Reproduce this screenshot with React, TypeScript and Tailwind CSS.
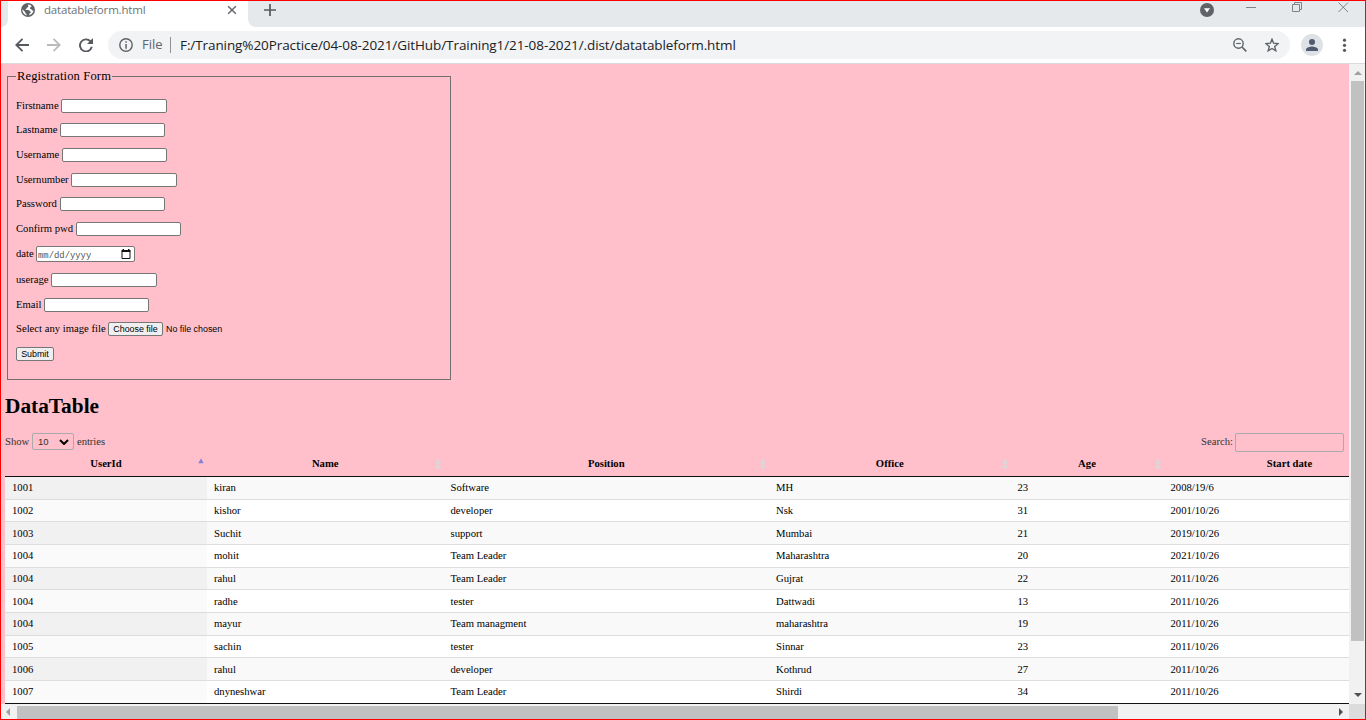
import React from "react";

const serif = "font-['Liberation_Serif',serif]";

const fields = [
  { label: "Firstname", cls: "w-[45px]", box: "w-[106px] h-[14px]", row: "h-[14px] mb-[10px]" },
  { label: "Lastname", cls: "w-[44px]", box: "w-[105px] h-[14px]", row: "h-[14px] mb-[11px]" },
  { label: "Username", cls: "w-[46px]", box: "w-[105px] h-[14px]", row: "h-[14px] mb-[11px]" },
  { label: "Usernumber", cls: "w-[55px]", box: "w-[106px] h-[14px]", row: "h-[14px] mb-[10px]" },
  { label: "Password", cls: "w-[44px]", box: "w-[105px] h-[14px]", row: "h-[14px] mb-[11px]" },
  { label: "Confirm pwd", cls: "w-[60px]", box: "w-[105px] h-[14px]", row: "h-[14px] mb-[10px]" },
  { label: "date", cls: "w-[20px]", box: "w-[99px] h-[16px]", row: "h-[16px] mb-[11px]", date: true },
  { label: "userage", cls: "w-[35px]", box: "w-[106px] h-[14px]", row: "h-[14px] mb-[11px]" },
  { label: "Email", cls: "w-[28px]", box: "w-[105px] h-[14px]", row: "h-[14px] mb-[10px]" },
];

const rows = [
  ["1001", "kiran", "Software", "MH", "23", "2008/19/6"],
  ["1002", "kishor", "developer", "Nsk", "31", "2001/10/26"],
  ["1003", "Suchit", "support", "Mumbai", "21", "2019/10/26"],
  ["1004", "mohit", "Team Leader", "Maharashtra", "20", "2021/10/26"],
  ["1004", "rahul", "Team Leader", "Gujrat", "22", "2011/10/26"],
  ["1004", "radhe", "tester", "Dattwadi", "13", "2011/10/26"],
  ["1004", "mayur", "Team managment", "maharashtra", "19", "2011/10/26"],
  ["1005", "sachin", "tester", "Sinnar", "23", "2011/10/26"],
  ["1006", "rahul", "developer", "Kothrud", "27", "2011/10/26"],
  ["1007", "dnyneshwar", "Team Leader", "Shirdi", "34", "2011/10/26"],
];

const columns = "grid grid-cols-[202px_236.5px_325.5px_241.5px_153px_252px] w-[1410.5px]";
const headers = ["UserId", "Name", "Position", "Office", "Age", "Start date"];

function SortIcon({ active }: { active: boolean }) {
  return (
    <svg className="h-[14px] w-[8px] shrink-0" viewBox="0 0 8 14">
      {active ? (
        <path d="M4 1.5 6.7 6.2H1.3z" fill="#8080dd" />
      ) : (
        <path d="M4 1.5 6.8 6.7H1.2zM4 13.2 6.8 8H1.2z" fill="#d8d8d9" />
      )}
    </svg>
  );
}

function TabStrip() {
  return (
    <div className="flex h-[26px] bg-[#e6e9eb] font-['Open_Sans','Noto_Sans',sans-serif]">
      <div className="w-[7px] bg-white">
        <div className="h-[26px] w-[7px] rounded-br-[7px] bg-[#e6e9eb]" />
      </div>
      <div className="flex h-[26px] w-[240px] bg-white pl-[13px]">
        <svg className="mt-[2px] size-[14px]" viewBox="0 0 14 14">
          <circle cx="7" cy="7" r="7" fill="#5f6368" />
          <path
            d="M7.6 1.5c-.9.2-.8 1-.3 1.6.6.6-.3 1.2-1 1.3-.8.2-.5 1.4-1.3 1.6-.8.1-.5 1.1.4 1.1h2.2c1 .1.8 1.3 1.8 1.5 1 .1 1 1-.1 1.2-.9.1-.7 1.5-1.3 2.4A5.7 5.7 0 0 0 12.5 7.6c-1 .2-1.8-.2-1.9-1.1-.1-.8-1.7-.2-1.7-1.3s1.2-.6 1.6-1.6c.2-.6-.6-1.6-2.9-2.1zM1.4 6.3c-.3 2.7 1.4 5.3 4.3 6.2-.1-1-.2-1.5-.9-1.9-.8-.5-.4-1.7-1.1-2.2z"
            fill="#fff"
          />
        </svg>
        <span className="ml-[9px] mt-px w-[180px] whitespace-nowrap text-[11.5px] leading-[16px] tracking-[-0.18px] text-[#6e7276]">
          datatableform.html
        </span>
        <svg className="ml-[2px] mt-[3px] size-[12px]" viewBox="0 0 12 12" stroke="#5f6368" strokeWidth="1.4">
          <path d="M2.2 2.2 9.8 9.8M9.8 2.2 2.2 9.8" />
        </svg>
      </div>
      <div className="w-[10px] bg-white">
        <div className="h-[26px] rounded-bl-[8px] bg-[#e6e9eb]" />
      </div>
      <svg className="ml-[5px] mt-[2px] size-[14px]" viewBox="0 0 14 14" stroke="#55595d" strokeWidth="1.7">
        <path d="M7 1v12M1 7h12" />
      </svg>
      <div className="grow" />
      <svg className="mr-[32px] mt-[2px] size-[14px]" viewBox="0 0 14 14">
        <circle cx="7" cy="7" r="7" fill="#5f6368" />
        <path d="M4 5.3h6L7 9.5z" fill="#fff" />
      </svg>
      <svg className="mt-px h-[11px] w-[105px]" viewBox="0 0 105 11" fill="none" stroke="#808285" strokeWidth="1">
        <path d="M0 5.5h10" />
        <path d="M46.5 2.5h7v7h-7zM48.5 2.5v-2h7v7h-2" />
        <path d="m92.5.5 9.5 9.5M102 .5l-9.5 9.5" />
      </svg>
      <div className="w-[14px]" />
    </div>
  );
}

function Toolbar() {
  return (
    <div className="flex h-[37px] items-center border-b border-[#d8dadd] bg-white font-['Open_Sans','Noto_Sans',sans-serif]">
      <svg className="ml-[14px] size-[14px]" viewBox="0 0 14 14" fill="none" stroke="#55595d" strokeWidth="1.8">
        <path d="M14 7H1.5M7.5.8 1.3 7l6.2 6.2" />
      </svg>
      <svg className="ml-[18px] size-[14px]" viewBox="0 0 14 14" fill="none" stroke="#b9bbbd" strokeWidth="1.8">
        <path d="M0 7h12.5M6.5.8 12.7 7l-6.2 6.2" />
      </svg>
      <svg className="ml-[18px] size-[14px]" viewBox="0 0 14 14">
        <path d="M11.5 3.4A6 6 0 1 0 12.8 8.8" fill="none" stroke="#55595d" strokeWidth="1.9" />
        <path d="M14 0v6H8z" fill="#55595d" />
      </svg>
      <div className="ml-[15px] flex h-[28px] w-[1182px] items-center rounded-full bg-[#f1f3f4]">
        <svg className="ml-[11px] size-[14px]" viewBox="0 0 14 14">
          <circle cx="7" cy="7" r="6.2" fill="none" stroke="#5f6368" strokeWidth="1.4" />
          <path d="M6.3 3.3h1.5v1.5H6.3zM6.3 6h1.5v4.7H6.3z" fill="#5f6368" />
        </svg>
        <span className="ml-[9px] w-[28px] whitespace-nowrap text-[13px] text-[#5f6368]">File</span>
        <div className="h-[16px] w-px bg-[#8f9295]" />
        <span className="ml-[9px] w-[1053px] whitespace-nowrap text-[13.5px] tracking-[-0.085px] text-[#202124]">
          F:/Traning%20Practice/04-08-2021/GitHub/Training1/21-08-2021/.dist/datatableform.html
        </span>
        <svg className="size-[14px]" viewBox="0 0 14 14" fill="none" stroke="#5f6368" strokeWidth="1.4">
          <circle cx="5.5" cy="5.5" r="4.7" />
          <path d="M3.2 5.5h4.6" strokeWidth="1.1" />
          <path d="m9 9 4.3 4.3" strokeWidth="1.7" />
        </svg>
        <svg className="ml-[18px] size-[14px]" viewBox="0 0 14 14" fill="none" stroke="#5f6368" strokeWidth="1.4">
          <path d="m7 1.3 1.6 3.9 4.5.4-3.4 2.8 1.1 4.4L7 10.5l-3.8 2.3 1.1-4.4L.9 5.6l4.5-.4z" />
        </svg>
      </div>
      <svg className="ml-[11px] size-[22px]" viewBox="0 0 22 22">
        <circle cx="11" cy="11" r="11" fill="#dee1e6" />
        <circle cx="11" cy="8" r="3" fill="#4f5b6e" />
        <path d="M5 17v-1.5c0-2 4-3 6-3s6 1 6 3V17z" fill="#4f5b6e" />
      </svg>
      <svg className="ml-[18px] h-[14px] w-[6px]" viewBox="0 0 6 14" fill="#55595d">
        <circle cx="3.5" cy="2.2" r="1.6" />
        <circle cx="3.5" cy="7.3" r="1.6" />
        <circle cx="3.5" cy="12.3" r="1.6" />
      </svg>
    </div>
  );
}

function RegistrationForm() {
  return (
    <fieldset className="ml-[6px] mt-[4px] h-[312px] w-[444px] border border-[#70706c] pl-[8px]">
      <legend className="h-[16px] w-[96px] whitespace-nowrap pl-px text-[12.5px] leading-[16px] tracking-[0.16px]">
        Registration Form
      </legend>
      <div className="h-[15px]" />
      {fields.map((f) => (
        <div key={f.label} className={`flex items-center ${f.row}`}>
          <label className={`shrink-0 whitespace-nowrap pb-[2px] leading-[14px] ${f.cls}`}>{f.label}</label>
          <div className={`flex items-center justify-between rounded-[2px] border border-[#767676] bg-white ${f.box}`}>
            {f.date && (
              <>
                <span className="pl-px pt-[4px] font-['Liberation_Mono',monospace] text-[8.89px] leading-[12px] text-[#555]">
                  mm/dd/yyyy
                </span>
                <svg className="mr-[3px] size-[10px]" viewBox="0 0 10 10">
                  <path d="M1 2.5h8v7H1z" fill="none" stroke="#111" />
                  <path d="M.5 1h9v2h-9zM1.5 0H3v1H1.5zM7 0h1.5v1H7z" fill="#111" />
                </svg>
              </>
            )}
          </div>
        </div>
      ))}
      <div className="mb-[11px] flex h-[14px] items-center">
        <label className="w-[92px] shrink-0 whitespace-nowrap pb-[2px] leading-[14px]">Select any image file</label>
        <button className="h-[14px] w-[55px] whitespace-nowrap rounded-[2px] border border-[#767676] bg-[#efefef] font-['Liberation_Sans',sans-serif] text-[8.89px] leading-[12px]">
          Choose file
        </button>
        <span className="ml-[3px] whitespace-nowrap pt-px font-['Liberation_Sans',sans-serif] text-[8.89px] leading-[13px]">
          No file chosen
        </span>
      </div>
      <button className="block h-[14px] w-[38px] rounded-[2px] border border-[#767676] bg-[#efefef] font-['Liberation_Sans',sans-serif] text-[8.89px] leading-[12px]">
        Submit
      </button>
    </fieldset>
  );
}

function DataTable() {
  return (
    <div className="ml-[4px]">
      <h1 className="mt-[13px] h-[27px] text-[21.33px] font-bold leading-[27px]">DataTable</h1>
      <div className="mt-[13px] flex h-[19px] w-[1339px] text-[#333]">
        <span className="w-[27px] leading-[16px]">Show</span>
        <div className="flex h-[17px] w-[42px] items-center justify-between rounded-[2px] border border-[#aaa] pl-[5px] pr-[4px] font-['Liberation_Sans',sans-serif] text-[9.5px]">
          <span className="leading-[15px]">10</span>
          <svg className="h-[6px] w-[10px]" viewBox="0 0 10 6" fill="none" stroke="#000" strokeWidth="2">
            <path d="m1 1 4 4 4-4" />
          </svg>
        </div>
        <span className="ml-[3px] leading-[16px] tracking-[-0.05px]">entries</span>
        <span className="ml-auto mr-[2px] leading-[16px]">Search:</span>
        <div className="h-[19px] w-[109px] rounded-[2px] border border-[#aaa]" />
      </div>
      <div className={`${columns} h-[25px] border-b border-[#111] font-bold`}>
        {headers.map((h, i) => (
          <div key={h} className="flex h-[24px] items-center pr-[2px]">
            <span className="grow pb-[2px] pl-[10px] text-center leading-[22px]">{h}</span>
            <SortIcon active={i === 0} />
          </div>
        ))}
      </div>
      {rows.map((r, i) => (
        <div
          key={i}
          className={`${columns} border-b ${[1, 4, 7].includes(i) ? "h-[22px]" : "h-[23px]"} ${
            [2, 5, 8].includes(i) ? "leading-[22px]" : "leading-[20px]"
          } ${i === 9 ? "border-[#111]" : "border-[#ddd]"} ${i % 2 ? "bg-white" : "bg-[#f9f9f9]"}`}
        >
          {r.map((c, j) => (
            <div key={j} className={`pl-[7px] ${j === 0 ? (i % 2 ? "bg-[#fafafa]" : "bg-[#f1f1f1]") : ""}`}>
              {c}
            </div>
          ))}
        </div>
      ))}
    </div>
  );
}

export default function App() {
  return (
    <div className="flex h-[720px] w-[1366px] flex-col overflow-hidden border border-[#f00] bg-white">
      <TabStrip />
      <Toolbar />
      <div className="flex h-[640px] shrink-0">
        <div className={`h-[640px] w-[1348px] overflow-hidden bg-[#ffc0cb] text-[10.67px] text-black ${serif}`}>
          <RegistrationForm />
          <DataTable />
        </div>
        <div className="flex w-[16px] flex-col items-center bg-[#f1f1f1]">
          <svg className="ml-px mt-[7px] h-[4px] w-[8px]" viewBox="0 0 8 4">
            <path d="M0 4 4 0l4 4z" fill="#a0a0a0" />
          </svg>
          <div className="ml-px mt-[6px] h-[560px] w-[13px] bg-[#c1c1c1]" />
          <svg className="ml-px mt-[52px] h-[4px] w-[8px]" viewBox="0 0 8 4">
            <path d="m0 0 4 4 4-4z" fill="#505050" />
          </svg>
        </div>
      </div>
      <div className="flex h-[15px] shrink-0 items-center bg-[#f1f1f1]">
        <svg className="ml-[5px] h-[8px] w-[4px]" viewBox="0 0 4 8">
          <path d="M4 0 0 4l4 4z" fill="#a0a0a0" />
        </svg>
        <div className="ml-[7px] mt-[2px] h-[13px] w-[1101px] bg-[#c1c1c1]" />
        <svg className="ml-[221px] h-[8px] w-[4px]" viewBox="0 0 4 8">
          <path d="m0 0 4 4-4 4z" fill="#505050" />
        </svg>
        <div className="ml-auto h-[15px] w-[16px] bg-[#dcdcdc]" />
      </div>
    </div>
  );
}
